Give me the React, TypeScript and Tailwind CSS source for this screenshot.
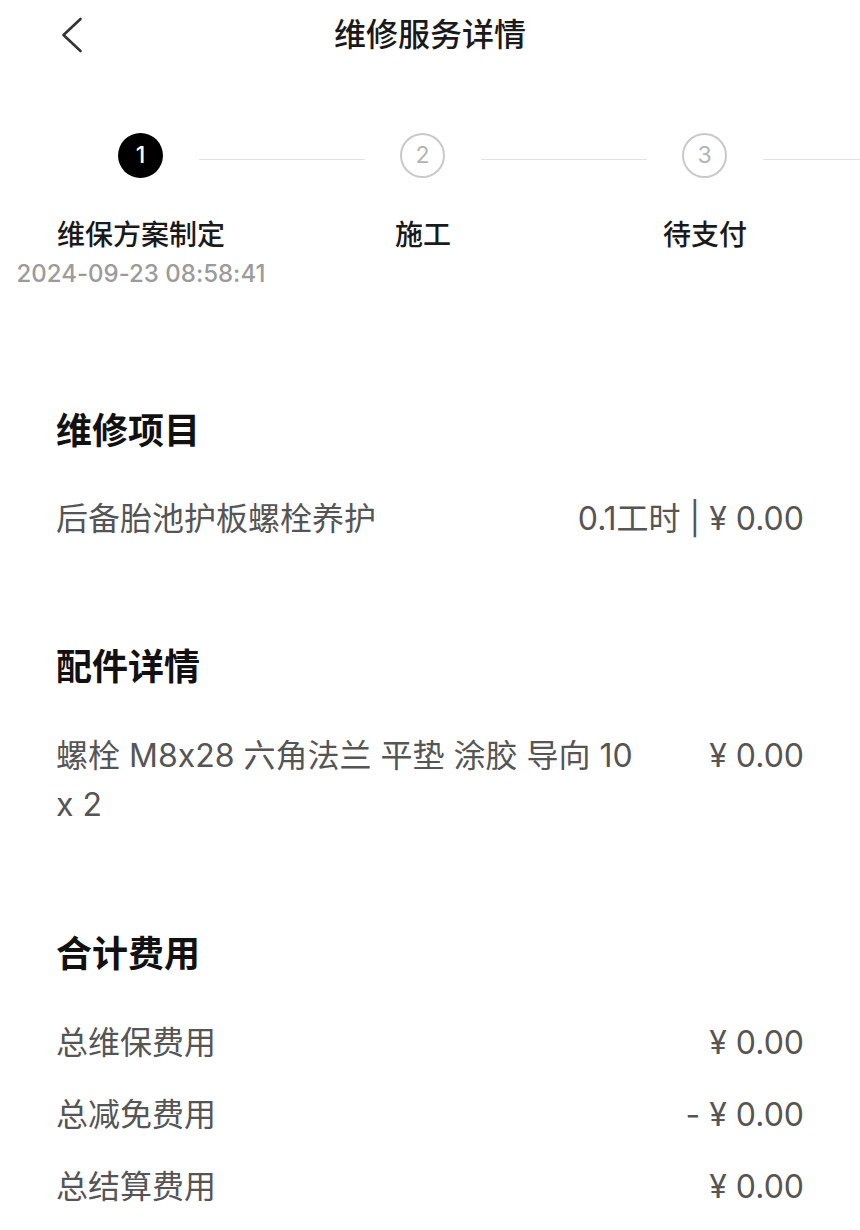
import React from "react";

const FONT = { fontFamily: '"Inter", "Noto Sans CJK SC", sans-serif' };

function Step({ n, label, active, first }: { n: number; label: string; active?: boolean; first?: boolean }) {
  return (
    <div className="w-[282px] shrink-0 flex flex-col items-center">
      <div className="w-full flex items-center h-[45px]">
        <div className={`flex-1 h-px mt-[7px] ${first ? "bg-transparent" : "bg-[#e3e3e3]"}`} />
        <div className="w-[35px]" />
        {active ? (
          <div className="w-[45px] h-[45px] rounded-full bg-black flex items-center justify-center text-white text-[23px] font-medium">
            {n}
          </div>
        ) : (
          <div className="w-[45px] h-[45px] rounded-full border-2 border-[#c9c9c9] flex items-center justify-center text-[#b3b3b3] text-[23px]">
            {n}
          </div>
        )}
        <div className="w-[36px]" />
        <div className="flex-1 h-px mt-[7px] bg-[#e3e3e3]" />
      </div>
      <div className="mt-[39px] h-[36px] leading-[36px] text-[28px] font-medium text-[#1a1a1a]">{label}</div>
    </div>
  );
}

function Row({ left, right, h = "h-[72px]" }: { left: string; right: string; h?: string }) {
  return (
    <div className={`${h} flex items-center justify-between text-[32px] text-[#555555]`}>
      <span>{left}</span>
      <span>{right}</span>
    </div>
  );
}

export default function App() {
  return (
    <div className="w-[860px] min-h-[1230px] bg-white overflow-hidden [font-feature-settings:'calt'_0]" style={FONT}>
      {/* header */}
      <div className="h-[70px] grid grid-cols-[1fr_auto_1fr] items-center">
        <div className="pl-[61px] flex items-center">
          <svg width="22" height="36" viewBox="0 0 22 36" fill="none">
            <path d="M19.5 2 L2.5 18 L19.5 34" stroke="#333333" strokeWidth="2.6" strokeLinecap="round" strokeLinejoin="round" />
          </svg>
        </div>
        <div className="text-[32px] font-medium text-[#1a1a1a] leading-none">维修服务详情</div>
        <div />
      </div>

      {/* stepper */}
      <div className="mt-[63px] flex">
        <Step n={1} label="维保方案制定" active first />
        <Step n={2} label="施工" />
        <Step n={3} label="待支付" />
        <div className="flex-1 h-[45px] flex items-center">
          <div className="w-full h-px mt-[7px] bg-[#e3e3e3]" />
        </div>
      </div>
      <div className="w-[282px] flex justify-center mt-[6px]">
        <div className="text-[24px] leading-[30px] font-medium text-[#9b9b9b]">2024-09-23 08:58:41</div>
      </div>

      {/* 维修项目 */}
      <div className="px-[56px]">
        <div className="mt-[112px] h-[60px] flex items-center text-[36px] font-semibold text-[#111111]">维修项目</div>
        <div className="mt-[28px] h-[60px] flex items-center justify-between text-[32px] text-[#555555]">
          <span>后备胎池护板螺栓养护</span>
          <span>0.1工时 | ¥ 0.00</span>
        </div>

        {/* 配件详情 */}
        <div className="mt-[88px] h-[60px] flex items-center text-[36px] font-semibold text-[#111111]">配件详情</div>
        <div className="mt-[34px] flex justify-between text-[32px] text-[#555555] leading-[49px]">
          <span className="w-[592px]">螺栓 M8x28 六角法兰 平垫 涂胶 导向 10 x 2</span>
          <span>¥ 0.00</span>
        </div>

        {/* 合计费用 */}
        <div className="mt-[95px] h-[60px] flex items-center text-[36px] font-semibold text-[#111111]">合计费用</div>
        <div className="mt-[23px]">
          <Row left="总维保费用" right="¥ 0.00" />
          <Row left="总减免费用" right="- ¥ 0.00" />
          <Row left="总结算费用" right="¥ 0.00" />
        </div>
      </div>
    </div>
  );
}
